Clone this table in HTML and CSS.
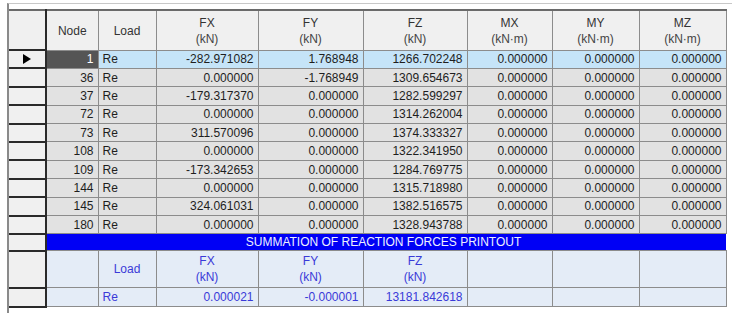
FILE: index.html
```html
<!DOCTYPE html>
<html>
<head>
<meta charset="utf-8">
<link rel="stylesheet" href="styles.css">
</head>
<body>
<div class="frame">
  <table class="grid">
    <colgroup>
      <col class="c-rh"><col class="c-node"><col class="c-load"><col class="c-fx"><col class="c-fy"><col class="c-fz"><col class="c-mx"><col class="c-my"><col class="c-mz">
    </colgroup>
    <tr class="head">
      <td class="rh rh-top"></td>
      <th>Node</th><th>Load</th>
      <th>FX<br><span class="u">(kN)</span></th>
      <th>FY<br><span class="u">(kN)</span></th>
      <th>FZ<br><span class="u">(kN)</span></th>
      <th>MX<br><span class="u">(kN·m)</span></th>
      <th>MY<br><span class="u">(kN·m)</span></th>
      <th>MZ<br><span class="u">(kN·m)</span></th>
    </tr>
    <tr class="row sel">
      <td class="rh"><span class="arrow"></span></td>
      <td class="num nodesel">1</td><td class="txt">Re</td>
      <td class="num">-282.971082</td><td class="num">1.768948</td><td class="num">1266.702248</td>
      <td class="num">0.000000</td><td class="num">0.000000</td><td class="num">0.000000</td>
    </tr>
    <tr class="row">
      <td class="rh"></td><td class="num">36</td><td class="txt">Re</td>
      <td class="num">0.000000</td><td class="num">-1.768949</td><td class="num">1309.654673</td>
      <td class="num">0.000000</td><td class="num">0.000000</td><td class="num">0.000000</td>
    </tr>
    <tr class="row">
      <td class="rh"></td><td class="num">37</td><td class="txt">Re</td>
      <td class="num">-179.317370</td><td class="num">0.000000</td><td class="num">1282.599297</td>
      <td class="num">0.000000</td><td class="num">0.000000</td><td class="num">0.000000</td>
    </tr>
    <tr class="row">
      <td class="rh"></td><td class="num">72</td><td class="txt">Re</td>
      <td class="num">0.000000</td><td class="num">0.000000</td><td class="num">1314.262004</td>
      <td class="num">0.000000</td><td class="num">0.000000</td><td class="num">0.000000</td>
    </tr>
    <tr class="row">
      <td class="rh"></td><td class="num">73</td><td class="txt">Re</td>
      <td class="num">311.570096</td><td class="num">0.000000</td><td class="num">1374.333327</td>
      <td class="num">0.000000</td><td class="num">0.000000</td><td class="num">0.000000</td>
    </tr>
    <tr class="row">
      <td class="rh"></td><td class="num">108</td><td class="txt">Re</td>
      <td class="num">0.000000</td><td class="num">0.000000</td><td class="num">1322.341950</td>
      <td class="num">0.000000</td><td class="num">0.000000</td><td class="num">0.000000</td>
    </tr>
    <tr class="row">
      <td class="rh"></td><td class="num">109</td><td class="txt">Re</td>
      <td class="num">-173.342653</td><td class="num">0.000000</td><td class="num">1284.769775</td>
      <td class="num">0.000000</td><td class="num">0.000000</td><td class="num">0.000000</td>
    </tr>
    <tr class="row">
      <td class="rh"></td><td class="num">144</td><td class="txt">Re</td>
      <td class="num">0.000000</td><td class="num">0.000000</td><td class="num">1315.718980</td>
      <td class="num">0.000000</td><td class="num">0.000000</td><td class="num">0.000000</td>
    </tr>
    <tr class="row">
      <td class="rh"></td><td class="num">145</td><td class="txt">Re</td>
      <td class="num">324.061031</td><td class="num">0.000000</td><td class="num">1382.516575</td>
      <td class="num">0.000000</td><td class="num">0.000000</td><td class="num">0.000000</td>
    </tr>
    <tr class="row">
      <td class="rh"></td><td class="num">180</td><td class="txt">Re</td>
      <td class="num">0.000000</td><td class="num">0.000000</td><td class="num">1328.943788</td>
      <td class="num">0.000000</td><td class="num">0.000000</td><td class="num">0.000000</td>
    </tr>
    <tr class="bar">
      <td class="rh"></td>
      <td class="bartext" colspan="8">SUMMATION OF REACTION FORCES PRINTOUT</td>
    </tr>
    <tr class="sumhead">
      <td class="rh"></td><td></td><td class="ctr">Load</td>
      <td class="ctr">FX<br>(kN)</td><td class="ctr">FY<br>(kN)</td><td class="ctr">FZ<br>(kN)</td>
      <td></td><td></td><td></td>
    </tr>
    <tr class="sumrow">
      <td class="rh"></td><td></td><td class="txt">Re</td>
      <td class="num">0.000021</td><td class="num">-0.000001</td><td class="num">13181.842618</td>
      <td></td><td></td><td></td>
    </tr>
  </table>
</div>
</body>
</html>
```

FILE: styles.css
```css
html, body {
  margin: 0;
  padding: 0;
  background: #ffffff;
}
body {
  font-family: "Liberation Sans", Arial, sans-serif;
  font-size: 12px;
  color: #222;
}
.frame {
  margin: 3px 0 0 7px;
  border-top: 1px solid #c8c8c8;
  border-left: 2px solid #8a8a8a;
  height: 310px;
  padding-top: 5px;
  box-sizing: border-box;
}
.grid {
  border-collapse: collapse;
  table-layout: fixed;
  width: 717px;
}
.c-rh { width: 37px; }
.c-node { width: 52px; }
.c-load { width: 58px; }
.c-fx { width: 102px; }
.c-fy { width: 105px; }
.c-fz { width: 104px; }
.c-mx { width: 85px; }
.c-my { width: 87px; }
.c-mz { width: 87px; }

.grid td, .grid th {
  padding: 0 4px;
  white-space: nowrap;
  overflow: hidden;
  line-height: 14px;
}
.head th {
  height: 40px;
  box-sizing: border-box;
  background: #f0f0f0;
  border: 1px solid #8c8c8c;
  border-top: 2px solid #6a6a6a;
  font-weight: normal;
  color: #333;
  text-align: center;
  line-height: 16px;
  padding-top: 1px;
}
.head th .u { color: #444; }

.rh {
  background: #f0f0f0;
  border-right: 2px solid #2a2a2a;
  border-bottom: 2px solid #2a2a2a;
  padding: 0 !important;
  position: relative;
}
.rh-top {
  border-top: 2px solid #6a6a6a;
}
.arrow {
  position: absolute;
  left: 14px;
  top: 3px;
  width: 0;
  height: 0;
  border-top: 5.5px solid transparent;
  border-bottom: 5.5px solid transparent;
  border-left: 8px solid #000;
}

.row td {
  height: 18.4px;
  box-sizing: border-box;
  background: #e2e2e2;
  border-right: 1px solid #8c8c8c;
  border-bottom: 1px solid #8c8c8c;
  color: #1e1e1e;
}
.row td.rh {
  background: #f0f0f0;
  border-right: 2px solid #2a2a2a;
  border-bottom: 2px solid #2a2a2a;
}
.row.sel td {
  background: #c5e4f8;
}
.row.sel td.rh { background: #f0f0f0; }
.row.sel td.nodesel {
  background: #555555;
  color: #ffffff;
}
.num { text-align: right; }
.txt { text-align: left; }
.ctr { text-align: center; }

.bar td {
  height: 17px;
  box-sizing: border-box;
}
.bartext {
  background: #0000f5;
  color: #eef0ff;
  text-align: center;
  padding-right: 10px !important;
  border-bottom: 1px solid #8c8c8c;
}

.sumhead td, .sumrow td {
  background: #e4ecf7;
  border-right: 1px solid #8c8c8c;
  border-bottom: 1px solid #8c8c8c;
  color: #3a3ad8;
  box-sizing: border-box;
}
.sumhead td { height: 37px; line-height: 16px; }
.sumrow td { height: 19px; }
.sumhead td.rh, .sumrow td.rh {
  background: #f0f0f0;
  border-right: 2px solid #2a2a2a;
  border-bottom: 2px solid #2a2a2a;
}
```
